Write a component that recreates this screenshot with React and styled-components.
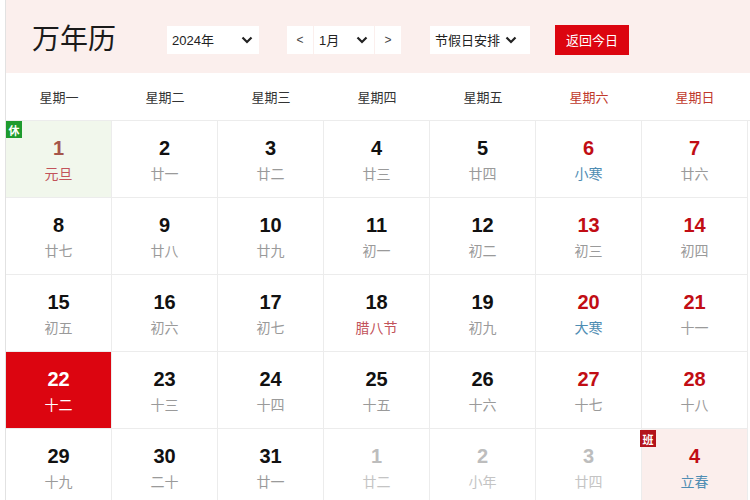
import React from 'react'
import styled, { createGlobalStyle } from 'styled-components'

const GlobalStyle = createGlobalStyle`
  html, body { margin: 0; padding: 0; background: #fff; }
  body { font-family: "Liberation Sans", Arial, "Noto Sans CJK SC", sans-serif; }
`

const weekdays = ['星期一', '星期二', '星期三', '星期四', '星期五', '星期六', '星期日']

// kind: normal | holiday | today | other | work
const days = [
  { d: 1, l: '元旦', lc: 'fest', kind: 'holiday', badge: '休' },
  { d: 2, l: '廿一' }, { d: 3, l: '廿二' }, { d: 4, l: '廿三' }, { d: 5, l: '廿四' },
  { d: 6, l: '小寒', lc: 'term' }, { d: 7, l: '廿六' },
  { d: 8, l: '廿七' }, { d: 9, l: '廿八' }, { d: 10, l: '廿九' }, { d: 11, l: '初一' },
  { d: 12, l: '初二' }, { d: 13, l: '初三' }, { d: 14, l: '初四' },
  { d: 15, l: '初五' }, { d: 16, l: '初六' }, { d: 17, l: '初七' }, { d: 18, l: '腊八节', lc: 'fest' },
  { d: 19, l: '初九' }, { d: 20, l: '大寒', lc: 'term' }, { d: 21, l: '十一' },
  { d: 22, l: '十二', kind: 'today' }, { d: 23, l: '十三' }, { d: 24, l: '十四' }, { d: 25, l: '十五' },
  { d: 26, l: '十六' }, { d: 27, l: '十七' }, { d: 28, l: '十八' },
  { d: 29, l: '十九' }, { d: 30, l: '二十' }, { d: 31, l: '廿一' },
  { d: 1, l: '廿二', kind: 'other' }, { d: 2, l: '小年', kind: 'other' }, { d: 3, l: '廿四', kind: 'other' },
  { d: 4, l: '立春', lc: 'term', kind: 'work', badge: '班' },
]

function Chevron() {
  return (
    <svg width="12" height="8" viewBox="0 0 12 8">
      <path d="M1.5 1.5 L6 6 L10.5 1.5" fill="none" stroke="#222" strokeWidth="2.2" />
    </svg>
  )
}

function App() {
  return (
    <Page>
      <GlobalStyle />
      <Frame>
        <Header>
          <Title>万年历</Title>
          <YearSelect>
            <span>2024年</span>
            <Chevron />
          </YearSelect>
          <MonthGroup>
            <Arrow>&lt;</Arrow>
            <MonthBox>
              <span>1月</span>
              <Chevron />
            </MonthBox>
            <Arrow>&gt;</Arrow>
          </MonthGroup>
          <HolidaySelect>
            <span>节假日安排</span>
            <Chevron />
          </HolidaySelect>
          <TodayButton>返回今日</TodayButton>
        </Header>

        <WeekRow>
          {weekdays.map((w, i) => (
            <WeekCell key={w} $weekend={i >= 5}>{w}</WeekCell>
          ))}
        </WeekRow>

        <Grid>
          {days.map((item, i) => {
            const weekend = i % 7 >= 5
            return (
              <Cell key={i} $kind={item.kind}>
                {item.badge && <Badge $kind={item.kind}>{item.badge}</Badge>}
                <DayNum $kind={item.kind} $weekend={weekend}>{item.d}</DayNum>
                <Lunar $kind={item.kind} $lc={item.lc}>{item.l}</Lunar>
              </Cell>
            )
          })}
        </Grid>
      </Frame>
    </Page>
  )
}

const Page = styled.div`
  width: 750px;
  height: 500px;
  overflow: hidden;
  padding-left: 5px;
  box-sizing: border-box;
  background: #fff;
`

const Frame = styled.div`
  border-left: 1px solid #e2e2e2;
  width: 744px;
`

const Header = styled.div`
  height: 73px;
  background: #fbefed;
  display: flex;
  align-items: center;
  padding-left: 26px;
  box-sizing: border-box;
`

const Title = styled.h1`
  margin: 0 51px 0 0;
  font-size: 28px;
  font-weight: 400;
  color: #1a1a1a;
  font-family: "Noto Sans CJK SC", sans-serif;
  letter-spacing: 0;
`

const Select = styled.div`
  height: 28px;
  background: #fff;
  display: flex;
  align-items: center;
  justify-content: space-between;
  padding: 0 6px 0 5px;
  box-sizing: border-box;
  font-size: 13px;
  color: #222;
  font-family: "Liberation Sans", "Noto Sans CJK SC", sans-serif;
  position: relative;
  top: 3px;
`

const YearSelect = styled(Select)`
  width: 92px;
  margin-right: 28px;
`

const MonthGroup = styled.div`
  display: flex;
  height: 28px;
  gap: 1px;
  margin-right: 29px;
  position: relative;
  top: 3px;
`

const Arrow = styled.div`
  width: 26px;
  background: #fff;
  display: flex;
  align-items: center;
  justify-content: center;
  font-size: 12px;
  color: #444;
`

const MonthBox = styled.div`
  width: 60px;
  background: #fff;
  display: flex;
  align-items: center;
  justify-content: space-between;
  padding: 0 6px 0 5px;
  box-sizing: border-box;
  font-size: 13px;
  color: #222;
`

const HolidaySelect = styled(Select)`
  width: 100px;
  margin-right: 25px;
  padding: 0 5px 0 5px;
  justify-content: flex-start;
  gap: 5px;
`

const TodayButton = styled.button`
  height: 30px;
  width: 74px;
  border: none;
  background: #dc0510;
  color: #fff;
  font-size: 13px;
  font-family: "Noto Sans CJK SC", sans-serif;
  padding: 0;
  position: relative;
  top: 3px;
`

const WeekRow = styled.div`
  display: grid;
  grid-template-columns: repeat(7, 106px);
  height: 47px;
  background: #fff;
  border-bottom: 1px solid #ececec;
`

const WeekCell = styled.div`
  display: flex;
  align-items: center;
  justify-content: center;
  font-size: 13px;
  color: ${p => (p.$weekend ? '#c0392b' : '#333')};
`

const Grid = styled.div`
  display: grid;
  grid-template-columns: repeat(7, 106px);
  grid-auto-rows: 77px;
`

const cellBg = {
  holiday: '#f1f7ec',
  today: '#dc0510',
  work: '#fbeeec',
}

const Cell = styled.div`
  position: relative;
  display: flex;
  flex-direction: column;
  align-items: center;
  padding-top: 15px;
  box-sizing: border-box;
  border-right: 1px solid #ececec;
  border-bottom: 1px solid #ececec;
  background: ${p => cellBg[p.$kind] || '#fff'};
`

const Badge = styled.span`
  position: absolute;
  left: ${p => (p.$kind === 'work' ? '-2px' : '0')};
  top: ${p => (p.$kind === 'work' ? '1px' : '0')};
  width: 16px;
  height: 17px;
  display: flex;
  align-items: center;
  justify-content: center;
  font-size: 11px;
  font-weight: 700;
  color: #fff;
  background: ${p => (p.$kind === 'work' ? '#b3141c' : '#1e9b2e')};
  font-family: "Noto Sans CJK SC", sans-serif;
`

const dayColor = p => {
  if (p.$kind === 'today') return '#fff'
  if (p.$kind === 'other') return '#bdbdbd'
  if (p.$kind === 'holiday') return '#a5554a'
  if (p.$weekend) return '#c10d14'
  return '#111'
}

const DayNum = styled.div`
  font-size: 20px;
  font-weight: 700;
  line-height: 24px;
  color: ${dayColor};
`

const lunarColor = p => {
  if (p.$kind === 'today') return '#fff'
  if (p.$kind === 'other') return '#c4c4c4'
  if (p.$lc === 'fest') return '#c2535a'
  if (p.$lc === 'term') return '#4f8db3'
  return '#9a9a9a'
}

const Lunar = styled.div`
  margin-top: 4px;
  font-size: 14px;
  line-height: 18px;
  color: ${lunarColor};
  font-family: "Noto Sans CJK SC", sans-serif;
`

export default App
